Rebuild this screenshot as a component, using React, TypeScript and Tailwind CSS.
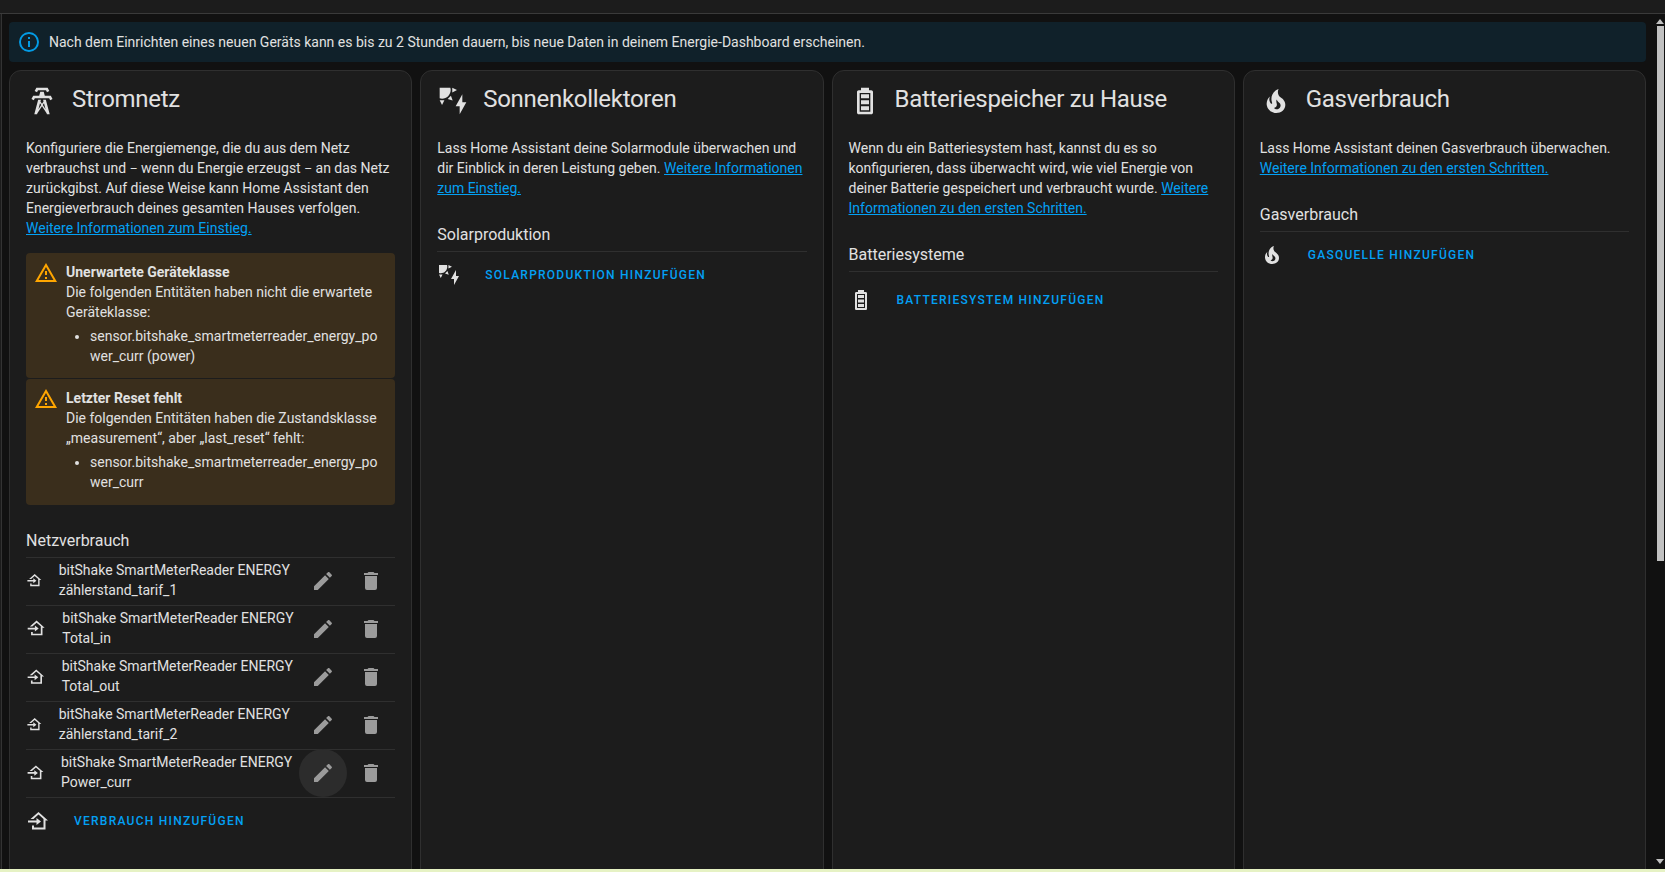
const tower = "M8.28,5.45L6.5,4.55L7.76,2H16.23L17.5,4.55L15.72,5.44L15,4H9L8.28,5.45M18.62,8H14.09L13.3,5H10.7L9.91,8H5.38L4.1,10.55L5.89,11.44L6.62,10H17.38L18.1,11.45L19.89,10.56L18.62,8M17.77,22H15.7L15.46,21.1L12,15.9L8.53,21.1L8.3,22H6.23L9.12,11H11.19L10.83,12.35L12,14.1L13.16,12.35L12.81,11H14.88L17.77,22M11.4,15L10.5,13.65L9.32,18.13L11.4,15M14.68,18.12L13.5,13.64L12.6,15L14.68,18.12Z";
const solar = "M11.45,2V5.55L15,3.77L11.45,2M10.45,8L8,10.46L11.75,11.71L10.45,8M2,11.45L3.77,15L5.55,11.45H2M10,2H2V10C2.57,10.17 3.17,10.25 3.77,10.25C7.35,10.26 10.26,7.35 10.27,3.75C10.26,3.16 10.17,2.57 10,2M17,22V16H14L19,7V13H22L17,22Z";
const battery = "M16 20H8V6H16M16.67 4H15V2H9V4H7.33C6.6 4 6 4.6 6 5.33V20.67C6 21.4 6.6 22 7.33 22H16.67C17.41 22 18 21.41 18 20.67V5.33C18 4.6 17.4 4 16.67 4M15 16H9V19H15V16M15 7H9V10H15V7M15 11.5H9V14.5H15V11.5Z";
const fire = "M17.66 11.2C17.43 10.9 17.15 10.64 16.89 10.38C16.22 9.78 15.46 9.35 14.82 8.72C13.33 7.26 13 4.85 13.95 3C13 3.23 12.17 3.75 11.46 4.32C8.87 6.4 7.85 10.07 9.07 13.22C9.11 13.32 9.15 13.42 9.15 13.55C9.15 13.77 9 13.97 8.8 14.05C8.57 14.15 8.33 14.09 8.14 13.93C8.08 13.88 8.04 13.83 8 13.76C6.87 12.33 6.69 10.28 7.45 8.64C5.78 10 4.87 12.3 5 14.47C5.06 14.97 5.12 15.47 5.29 15.97C5.43 16.57 5.7 17.17 6 17.7C7.08 19.43 8.95 20.67 10.96 20.92C13.1 21.19 15.39 20.8 17.03 19.32C18.86 17.66 19.5 15 18.56 12.72L18.43 12.46C18.22 12 17.66 11.2 17.66 11.2M14.5 17.5C14.22 17.74 13.76 18 13.4 18.1C12.28 18.5 11.16 17.94 10.5 17.28C11.69 17 12.4 16.12 12.61 15.23C12.78 14.43 12.46 13.77 12.33 13C12.21 12.26 12.23 11.63 12.5 10.94C12.69 11.32 12.89 11.7 13.13 12C13.9 13 15.11 13.44 15.37 14.8C15.41 14.94 15.43 15.08 15.43 15.23C15.46 16.05 15.1 16.95 14.5 17.5H14.5Z";
const homeImport = "M12.5 3L22 11.5H19.5V20.5H6V16.5H8V18.5H17.5V9.9L12.5 5.6L7.5 10H4.5L12.5 3ZM2 11.5H10.5V9L15 12.5L10.5 16V13.5H2V11.5Z";
const pencil = "M20.71,7.04C21.1,6.65 21.1,6 20.71,5.63L18.37,3.29C18,2.9 17.35,2.9 16.96,3.29L15.12,5.12L18.87,8.87M3,17.25V21H6.75L17.81,9.93L14.06,6.18L3,17.25Z";
const trash = "M19,4H15.5L14.5,3H9.5L8.5,4H5V6H19M6,19A2,2 0 0,0 8,21H16A2,2 0 0,0 18,19V7H6V19Z";
const alertOutline = "M12,2L1,21H23M12,6L19.53,19H4.47M11,10V14H13V10M11,16V18H13V16";
const infoOutline = "M11,9H13V7H11M12,20C7.59,20 4,16.41 4,12C4,7.59 7.59,4 12,4C16.41,4 20,7.59 20,12C20,16.41 16.41,20 12,20M12,2A10,10 0 0,0 2,12A10,10 0 0,0 12,22A10,10 0 0,0 22,12A10,10 0 0,0 12,2M11,17H13V11H11V17Z";

function Icon({ d, className }: { d: string; className: string }) {
  return (
    <svg viewBox="0 0 24 24" fill="currentColor" className={className}>
      <path d={d} />
    </svg>
  );
}

function Link({ children }: { children: React.ReactNode }) {
  return <a className="text-[#03a0f4] underline">{children}</a>;
}

function CardHeader({ icon, title }: { icon: string; title: string }) {
  return (
    <div className="flex h-[67px] items-start px-4 pt-[14px]">
      <Icon d={icon} className="h-8 w-8 shrink-0 text-[#e1e1e1]" />
      <h2 className="-mt-[2px] ml-[14px] text-2xl leading-8 font-normal tracking-[-0.012em] text-[#e1e1e1]">{title}</h2>
    </div>
  );
}

function Warning({ title, text, item, height }: { title: string; text: string; item: string; height: string }) {
  return (
    <div className={`flex gap-2 rounded bg-[#3a2e1c] px-2 pt-2 ${height}`}>
      <Icon d={alertOutline} className="h-6 w-6 shrink-0 text-[#ffa600]" />
      <div className="min-w-0 flex-1 pt-px text-sm text-[#e1e1e1]">
        <div className="font-bold">{title}</div>
        <div>{text}</div>
        <ul className="mt-1 list-disc pl-6 [overflow-wrap:anywhere]">
          <li>{item}</li>
        </ul>
      </div>
    </div>
  );
}

function Section({ title, className }: { title: string; className: string }) {
  return <h3 className={`border-b border-[#2f2f2f] pb-1 text-base leading-6 font-normal text-[#e1e1e1] ${className}`}>{title}</h3>;
}

function AddRow({ icon, label, className }: { icon: string; label: string; className?: string }) {
  return (
    <div className={`flex h-12 items-center pb-0.5 ${className ?? ""}`}>
      <Icon d={icon} className="h-6 w-6 shrink-0 text-[#e1e1e1]" />
      <span className="ml-6 text-xs leading-5 font-medium tracking-[1.25px] text-[#03a0f4] uppercase">{label}</span>
    </div>
  );
}

function MeterRow({ name, size, hovered }: { name: string; size: string; hovered?: boolean }) {
  return (
    <div className="flex h-12 items-center border-b border-[#2f2f2f] pb-0.5">
      <Icon d={homeImport} className={`shrink-0 text-[#e1e1e1] ${size}`} />
      <div className="ml-4 min-w-0 flex-1 pb-px text-sm leading-5 whitespace-nowrap text-[#e1e1e1]">
        <div>bitShake SmartMeterReader ENERGY</div>
        <div>{name}</div>
      </div>
      <div className={`flex h-12 w-12 shrink-0 items-center justify-center rounded-full ${hovered ? "bg-[#2c2c2c]" : ""}`}>
        <Icon d={pencil} className="h-6 w-6 text-[#9b9b9b]" />
      </div>
      <div className="flex h-12 w-12 shrink-0 items-center justify-center rounded-full">
        <Icon d={trash} className="h-6 w-6 text-[#9b9b9b]" />
      </div>
    </div>
  );
}

function Card({ children }: { children: React.ReactNode }) {
  return (
    <section className="min-h-[830px] min-w-0 rounded-xl border border-[#2f2f2f] bg-[#1c1c1c]">{children}</section>
  );
}

export default function App() {
  return (
    <div className="flex h-screen flex-col overflow-hidden bg-[#111111] font-['Roboto',sans-serif]">
      <header className="h-[14px] shrink-0 border-b border-[#3a3a3a] bg-[#1c1c1c]" />
      <div className="flex min-h-0 flex-1">
        <aside className="w-[2px] shrink-0 border-r border-[#333333] bg-[#1c1c1c]" />
        <main className="min-w-0 flex-1 overflow-hidden pt-2 pr-[9px] pl-[7px]">
          <div className="flex h-10 items-center gap-2 rounded bg-[#10212a] px-2">
            <Icon d={infoOutline} className="h-6 w-6 shrink-0 text-[#039be5]" />
            <span className="text-sm text-[#e1e1e1]">
              Nach dem Einrichten eines neuen Geräts kann es bis zu 2 Stunden dauern, bis neue Daten in deinem Energie-Dashboard erscheinen.
            </span>
          </div>
          <div className="mt-2 grid grid-cols-4 gap-2">
            <Card>
              <CardHeader icon={tower} title="Stromnetz" />
              <div className="px-4 text-sm text-[#e1e1e1]">
                <p>
                  Konfiguriere die Energiemenge, die du aus dem Netz verbrauchst und <span className="text-[12px]">–</span> wenn du Energie erzeugst <span className="text-[12px]">–</span> an das Netz zurückgibst. Auf diese Weise kann Home Assistant den Energieverbrauch deines gesamten Hauses verfolgen.{" "}
                  <Link>Weitere Informationen zum Einstieg.</Link>
                </p>
                <div className="mt-[15px] flex flex-col gap-px">
                  <Warning
                    height="h-[125px]"
                    title="Unerwartete Geräteklasse"
                    text="Die folgenden Entitäten haben nicht die erwartete Geräteklasse:"
                    item="sensor.bitshake_smartmeterreader_energy_power_curr (power)"
                  />
                  <Warning
                    height="h-[126px]"
                    title="Letzter Reset fehlt"
                    text="Die folgenden Entitäten haben die Zustandsklasse „measurement“, aber „last_reset“ fehlt:"
                    item="sensor.bitshake_smartmeterreader_energy_power_curr"
                  />
                </div>
                <Section title="Netzverbrauch" className="mt-6" />
                <MeterRow name="zählerstand_tarif_1" size="h-[16.7px] w-[16.7px]" />
                <MeterRow name="Total_in" size="h-[20.3px] w-[20.3px]" />
                <MeterRow name="Total_out" size="h-[19.7px] w-[19.7px]" />
                <MeterRow name="zählerstand_tarif_2" size="h-[16.7px] w-[16.7px]" />
                <MeterRow name="Power_curr" size="h-[19px] w-[19px]" hovered />
                <AddRow icon={homeImport} label="Verbrauch hinzufügen" />
              </div>
            </Card>
            <Card>
              <CardHeader icon={solar} title="Sonnenkollektoren" />
              <div className="px-4 text-sm text-[#e1e1e1]">
                <p>
                  Lass Home Assistant deine Solarmodule überwachen und dir Einblick in deren Leistung geben.{" "}
                  <Link>Weitere Informationen zum Einstieg.</Link>
                </p>
                <Section title="Solarproduktion" className="mt-[25px]" />
                <AddRow icon={solar} label="Solarproduktion hinzufügen" />
              </div>
            </Card>
            <Card>
              <CardHeader icon={battery} title="Batteriespeicher zu Hause" />
              <div className="px-4 text-sm text-[#e1e1e1]">
                <p>
                  Wenn du ein Batteriesystem hast, kannst du es so konfigurieren, dass überwacht wird, wie viel Energie von deiner Batterie gespeichert und verbraucht wurde.{" "}
                  <Link>Weitere Informationen zu den ersten Schritten.</Link>
                </p>
                <Section title="Batteriesysteme" className="mt-[25px]" />
                <AddRow icon={battery} label="Batteriesystem hinzufügen" className="mt-[5px]" />
              </div>
            </Card>
            <Card>
              <CardHeader icon={fire} title="Gasverbrauch" />
              <div className="px-4 text-sm text-[#e1e1e1]">
                <p>
                  Lass Home Assistant deinen Gasverbrauch überwachen.{" "}
                  <Link>Weitere Informationen zu den ersten Schritten.</Link>
                </p>
                <Section title="Gasverbrauch" className="mt-[25px]" />
                <AddRow icon={fire} label="Gasquelle hinzufügen" />
              </div>
            </Card>
          </div>
        </main>
        <div className="flex w-[10px] shrink-0 flex-col items-center pt-[5px] pb-[5px]">
          <svg viewBox="0 0 8 5" className="h-[5px] w-2 shrink-0 fill-[#c1c1c1]"><path d="M4 0L8 5H0Z" /></svg>
          <div className="mt-[2px] h-[535px] w-[7px] shrink-0 bg-[#c1c1c1]" />
          <div className="flex-1" />
          <svg viewBox="0 0 8 5" className="h-[5px] w-2 shrink-0 fill-[#c1c1c1]"><path d="M0 0H8L4 5Z" /></svg>
        </div>
      </div>
      <footer className="h-[3px] shrink-0 bg-[#e6f2c4]" />
    </div>
  );
}
